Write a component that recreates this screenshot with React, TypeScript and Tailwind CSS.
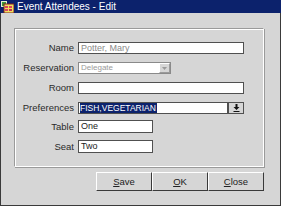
import React from 'react';

const font = { fontFamily: '"Liberation Sans", Arial, sans-serif' };

function TitleIcon() {
  return (
    <svg width="13" height="12" viewBox="0 0 13 12" className="shrink-0">
      <rect x="0" y="0" width="6" height="6" fill="#e8f0d0" />
      <rect x="1" y="1" width="4" height="4" fill="#3a9a3a" />
      <rect x="3" y="3" width="10" height="9" fill="#f0e060" stroke="#802020" strokeWidth="1" />
      <rect x="4" y="5" width="3" height="2" fill="#e04060" />
      <rect x="8" y="5" width="3" height="2" fill="#e04060" />
      <rect x="4" y="8" width="3" height="2" fill="#e04060" />
      <rect x="8" y="8" width="3" height="2" fill="#c03050" />
    </svg>
  );
}

function Row({ label, className, children }: { label: string; className?: string; children: React.ReactNode }) {
  return (
    <div className={`flex items-center ${className ?? ''}`}>
      <div className="w-[63px] pr-[4px] text-right text-[9.5px] leading-none text-[#2a2a2a]">{label}</div>
      {children}
    </div>
  );
}

function Btn({ first, rest }: { first: string; rest: string }) {
  return (
    <button className="w-[56px] h-[19px] bg-[#d6d6d6] border border-t-white border-l-white border-b-[#3a3a3a] border-r-[#3a3a3a] text-[9.5px] leading-none text-[#222] flex items-center justify-center">
      <span className="underline">{first}</span>
      {rest}
    </button>
  );
}

export default function App() {
  return (
    <div className="w-[281px] h-[206px] bg-[#d6d6d6] flex flex-col" style={font}>
      <div className="h-[13px] bg-[#0c226c] flex items-center gap-[3px] pl-[1px] text-white text-[10px] leading-none">
        <TitleIcon />
        <span>Event Attendees - Edit</span>
      </div>
      <div className="flex-1 flex flex-col border-l border-r border-b border-[#3a3a3a] pl-[13px] pr-[16px] pt-[15px]">
        <div className="h-[139px] w-[250px] border border-t-[#9a9a9a] border-l-[#9a9a9a] border-b-white border-r-white shadow-[inset_1px_1px_0_#ffffff,1px_1px_0_#9a9a9a] pt-[13px]">
          <Row label="Name">
            <div className="w-[166px] h-[12px] bg-white border border-[#505050] text-[9px] leading-none text-[#8a8a8a] pl-[2px] flex items-center">Potter, Mary</div>
          </Row>
          <Row label="Reservation" className="mt-[8px]">
            <div className="w-[93px] h-[12px] bg-white border border-[#8a8a8a] flex items-center">
              <span className="flex-1 text-[8px] leading-none text-[#9a9a9a] pl-[2px]">Delegate</span>
              <div className="w-[11px] h-[10px] bg-[#d6d6d6] border border-t-white border-l-white border-b-[#9a9a9a] border-r-[#9a9a9a] flex items-center justify-center">
                <svg width="5" height="3" viewBox="0 0 5 3"><path d="M0 0h5L2.5 3z" fill="#9a9a9a" /></svg>
              </div>
            </div>
          </Row>
          <Row label="Room" className="mt-[8px]">
            <div className="w-[166px] h-[12px] bg-white border border-[#505050]" />
          </Row>
          <Row label="Preferences" className="mt-[8px]">
            <div className="w-[166px] h-[12px] flex">
              <div className="flex-1 bg-white border border-[#505050] flex items-center pl-[1px]">
                <span className="bg-[#0c226c] text-white text-[8.5px] leading-[10px] h-[10px] pr-[1px]">FISH,VEGETARIAN</span>
              </div>
              <div className="w-[16px] h-[12px] bg-[#d6d6d6] border border-[#505050] flex items-center justify-center">
                <svg width="7" height="8" viewBox="0 0 7 8">
                  <path d="M2.5 0h2v3h2L3.5 6 0.5 3h2z" fill="#111" />
                  <rect x="0.5" y="7" width="6" height="1" fill="#111" />
                </svg>
              </div>
            </div>
          </Row>
          <Row label="Table" className="mt-[6px]">
            <div className="w-[75px] h-[13px] bg-white border border-[#505050] text-[9px] leading-none text-[#222] pl-[2px] flex items-center">One</div>
          </Row>
          <Row label="Seat" className="mt-[7px]">
            <div className="w-[75px] h-[13px] bg-white border border-[#505050] text-[9px] leading-none text-[#222] pl-[2px] flex items-center">Two</div>
          </Row>
        </div>
        <div className="flex justify-end mt-[5px] w-[250px]">
          <Btn first="S" rest="ave" />
          <Btn first="O" rest="K" />
          <Btn first="C" rest="lose" />
        </div>
      </div>
    </div>
  );
}
